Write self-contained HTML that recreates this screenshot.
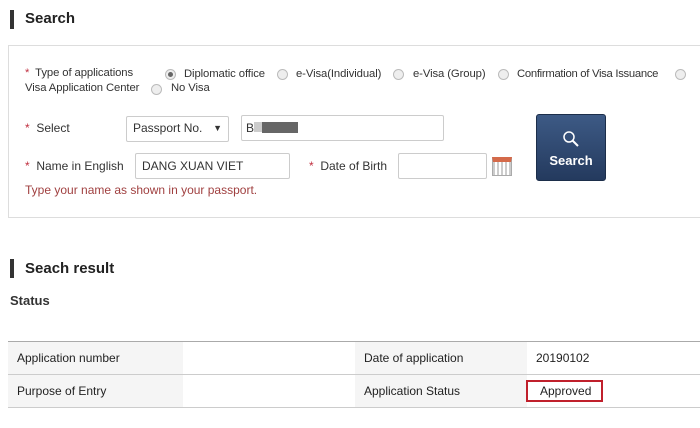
<!DOCTYPE html>
<html><head><meta charset="utf-8"><style>
*{margin:0;padding:0;box-sizing:border-box}
body{width:700px;height:428px;background:#fff;font-family:"Liberation Sans",Arial,sans-serif;color:#333;position:relative;overflow:hidden;font-size:12px}
.a{position:absolute;white-space:nowrap}
.bar{position:absolute;width:4px;background:#333}
h2{position:absolute;font-size:15px;font-weight:bold;color:#222}
.st{color:#c03040}
.rad{position:absolute;width:11px;height:11px;border:1px solid #bbb;border-radius:50%;background:#eee}
.rad.on::after{content:"";position:absolute;left:2px;top:2px;width:5px;height:5px;border-radius:50%;background:#666}
.inp{position:absolute;border:1px solid #ccc;border-radius:2px;background:#fff;height:26px}
td{height:33px;font-size:12px;padding-left:9px;border-bottom:1px solid #ccc;color:#222}
.r{font-size:11.3px;letter-spacing:-0.1px}
</style></head><body>
<div class="bar" style="left:10px;top:10px;height:19px"></div>
<h2 style="left:25px;top:10px">Search</h2>
<div style="position:absolute;left:8px;top:45px;width:700px;height:173px;border:1px solid #ddd;border-right:none"></div>
<div class="a r" style="left:25px;top:67px"><span class="st">*</span>&nbsp; Type of applications</div>
<div class="rad on" style="left:165px;top:69px"></div><div class="a r" style="left:184px;top:68px">Diplomatic office</div>
<div class="rad" style="left:277px;top:69px"></div><div class="a r" style="left:296px;top:68px">e-Visa(Individual)</div>
<div class="rad" style="left:393px;top:69px"></div><div class="a r" style="left:413px;top:68px">e-Visa (Group)</div>
<div class="rad" style="left:498px;top:69px"></div><div class="a r" style="left:517px;top:68px;letter-spacing:-0.3px">Confirmation of Visa Issuance</div>
<div class="rad" style="left:675px;top:69px"></div>
<div class="a r" style="left:25px;top:82px">Visa Application Center</div>
<div class="rad" style="left:151px;top:84px"></div><div class="a r" style="left:171px;top:82px">No Visa</div>
<div class="a" style="left:25px;top:121px"><span class="st">*</span>&nbsp; Select</div>
<div class="inp" style="left:126px;top:116px;width:103px;padding:4px 0 0 6px">Passport No. <span style="position:absolute;right:6px;font-size:9px;top:6px">▼</span></div>
<div class="inp" style="left:241px;top:115px;width:203px;padding:5px 0 0 4px">B<span style="display:inline-block;width:8px;height:10px;background:#ccc"></span><span style="display:inline-block;width:36px;height:11px;background:#666;vertical-align:-1px"></span></div>
<div class="a" style="left:25px;top:159px"><span class="st">*</span>&nbsp; Name in English</div>
<div class="inp" style="left:135px;top:153px;width:155px;padding:5px 0 0 6px">DANG XUAN VIET</div>
<div class="a" style="left:309px;top:159px"><span class="st">*</span>&nbsp; Date of Birth</div>
<div class="inp" style="left:398px;top:153px;width:89px"></div>
<div style="position:absolute;left:492px;top:157px;width:20px;height:19px;border:1px solid #aaa;background:repeating-linear-gradient(90deg,#ccc 0 2px,#fff 2px 4px);border-top:5px solid #d46a4a"></div>
<div class="a" style="left:25px;top:183px;color:#a04040">Type your name as shown in your passport.</div>
<div style="position:absolute;left:536px;top:114px;width:70px;height:67px;background:linear-gradient(#3d5a85,#243a5e);border-radius:3px;border:1px solid #1c2e4a;color:#fff;font-weight:bold;text-align:center">
<svg width="20" height="20" viewBox="0 0 20 20" style="position:absolute;left:24px;top:14px"><circle cx="8" cy="8" r="5" fill="none" stroke="#fff" stroke-width="1.5"/><line x1="11.5" y1="11.5" x2="17" y2="17" stroke="#fff" stroke-width="2"/></svg>
<div style="position:absolute;top:38px;width:100%;font-size:13px">Search</div></div>
<div class="bar" style="left:10px;top:259px;height:19px"></div>
<h2 style="left:25px;top:260px">Seach result</h2>
<div class="a" style="left:10px;top:293px;font-size:13px;font-weight:bold">Status</div>
<table style="position:absolute;left:8px;top:341px;width:700px;border-collapse:collapse;border-top:1px solid #aaa">
<tr><td style="width:175px;background:#f5f5f5">Application number</td><td style="width:172px"></td><td style="width:172px;background:#f5f5f5">Date of application</td><td>20190102</td></tr>
<tr><td style="background:#f5f5f5">Purpose of Entry</td><td></td><td style="background:#f5f5f5">Application Status</td><td style="padding-left:0"><span style="display:inline-block;border:2px solid #c0202c;padding:2px 10px 2px 12px;margin-left:-1px">Approved</span></td></tr>
</table>
</body></html>
